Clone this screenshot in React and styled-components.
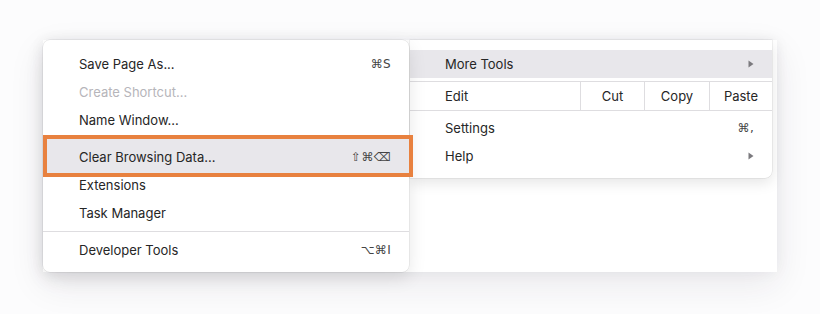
import React from "react";
import styled, { createGlobalStyle } from "styled-components";

const Global = createGlobalStyle`
  html, body { margin: 0; padding: 0; background: #fcfcfd; }
  body { font-family: Inter, "Noto Sans", "Liberation Sans", sans-serif; -webkit-font-smoothing: antialiased; }
`;

const Stage = styled.div`
  width: 820px;
  height: 314px;
  box-sizing: border-box;
  padding: 40px 0 0 43px;
  overflow: hidden;
`;

const Window = styled.div`
  width: 734px;
  height: 232px;
  background: #ffffff;
  display: flex;
  align-items: flex-start;
  box-shadow: 0 12px 34px rgba(40, 30, 60, 0.09), 0 0 14px rgba(40, 30, 60, 0.05);
`;

const MainMenu = styled.div`
  position: relative;
  z-index: 2;
  width: 366px;
  height: 232px;
  box-sizing: border-box;
  padding: 10px 0 8px;
  background: #ffffff;
  border-radius: 7px;
  box-shadow: 0 0 0 0.5px rgba(0, 0, 0, 0.1), 0 6px 18px rgba(0, 0, 0, 0.1);
`;

const SubMenu = styled.div`
  position: relative;
  z-index: 1;
  width: 362px;
  height: 138px;
  margin-left: 1px;
  box-sizing: border-box;
  padding: 10px 0 8px;
  background: #ffffff;
  border-radius: 0 0 7px 0;
  box-shadow: 0 0 0 0.5px rgba(0, 0, 0, 0.1), 0 5px 14px rgba(0, 0, 0, 0.1);
`;

const Item = styled.div`
  position: relative;
  height: 28px;
  display: flex;
  align-items: center;
  justify-content: space-between;
  padding: ${(p) => (p.$sub ? "0 18px 0 35px" : "0 18px 0 36px")};
  font-size: 13px;
  color: ${(p) => (p.$disabled ? "#b6b5ba" : "#262626")};
  background: ${(p) => (p.$hover ? "#e8e7eb" : "transparent")};
`;

const Framed = styled(Item)`
  &::before {
    content: "";
    position: absolute;
    top: -8px;
    bottom: -6px;
    left: 0;
    right: -4px;
    border: 4px solid #e8813f;
    background: #e8e7eb;
    z-index: 0;
  }
`;

const Label = styled.span`
  position: relative;
  z-index: 1;
`;

const Keys = styled.span`
  position: relative;
  z-index: 1;
  font-family: "DejaVu Sans", "Noto Sans", sans-serif;
  font-size: 12px;
  color: #444444;
  letter-spacing: 0.3px;
`;

const Separator = styled.div`
  height: 1px;
  background: #dedde0;
  margin: ${(p) => p.$m || "4px 0"};
`;

const EditRow = styled.div`
  display: grid;
  grid-template-columns: 170px 64px 65px 63px;
  height: 28px;
  border-bottom: 1px solid #dedde0;
  margin-bottom: 3px;
  font-size: 13px;
  color: #262626;
`;

const EditCell = styled.div`
  display: flex;
  align-items: center;
  justify-content: ${(p) => (p.$label ? "flex-start" : "center")};
  padding-left: ${(p) => (p.$label ? "35px" : "0")};
  border-left: ${(p) => (p.$label ? "none" : "1px solid #dedde0")};
`;

const Arrow = () => (
  <svg width="6" height="8" viewBox="0 0 6 8">
    <path d="M0.5 0.5 L5.5 4 L0.5 7.5 Z" fill="#7b7a7e" />
  </svg>
);

export default function App() {
  return (
    <>
      <Global />
      <Stage>
        <Window>
          <MainMenu>
            <Item>
              <Label>Save Page As...</Label>
              <Keys>⌘S</Keys>
            </Item>
            <Item $disabled>
              <Label>Create Shortcut...</Label>
            </Item>
            <Item>
              <Label>Name Window...</Label>
            </Item>
            <Separator />
            <Framed $hover>
              <Label>Clear Browsing Data...</Label>
              <Keys>⇧⌘⌫</Keys>
            </Framed>
            <Item>
              <Label>Extensions</Label>
            </Item>
            <Item>
              <Label>Task Manager</Label>
            </Item>
            <Separator />
            <Item>
              <Label>Developer Tools</Label>
              <Keys>⌥⌘I</Keys>
            </Item>
          </MainMenu>
          <SubMenu>
            <Item $sub $hover>
              <Label>More Tools</Label>
              <Arrow />
            </Item>
            <Separator $m="3px 0 0" />
            <EditRow>
              <EditCell $label>Edit</EditCell>
              <EditCell>Cut</EditCell>
              <EditCell>Copy</EditCell>
              <EditCell>Paste</EditCell>
            </EditRow>
            <Item $sub>
              <Label>Settings</Label>
              <Keys>⌘,</Keys>
            </Item>
            <Item $sub>
              <Label>Help</Label>
              <Arrow />
            </Item>
          </SubMenu>
        </Window>
      </Stage>
    </>
  );
}
